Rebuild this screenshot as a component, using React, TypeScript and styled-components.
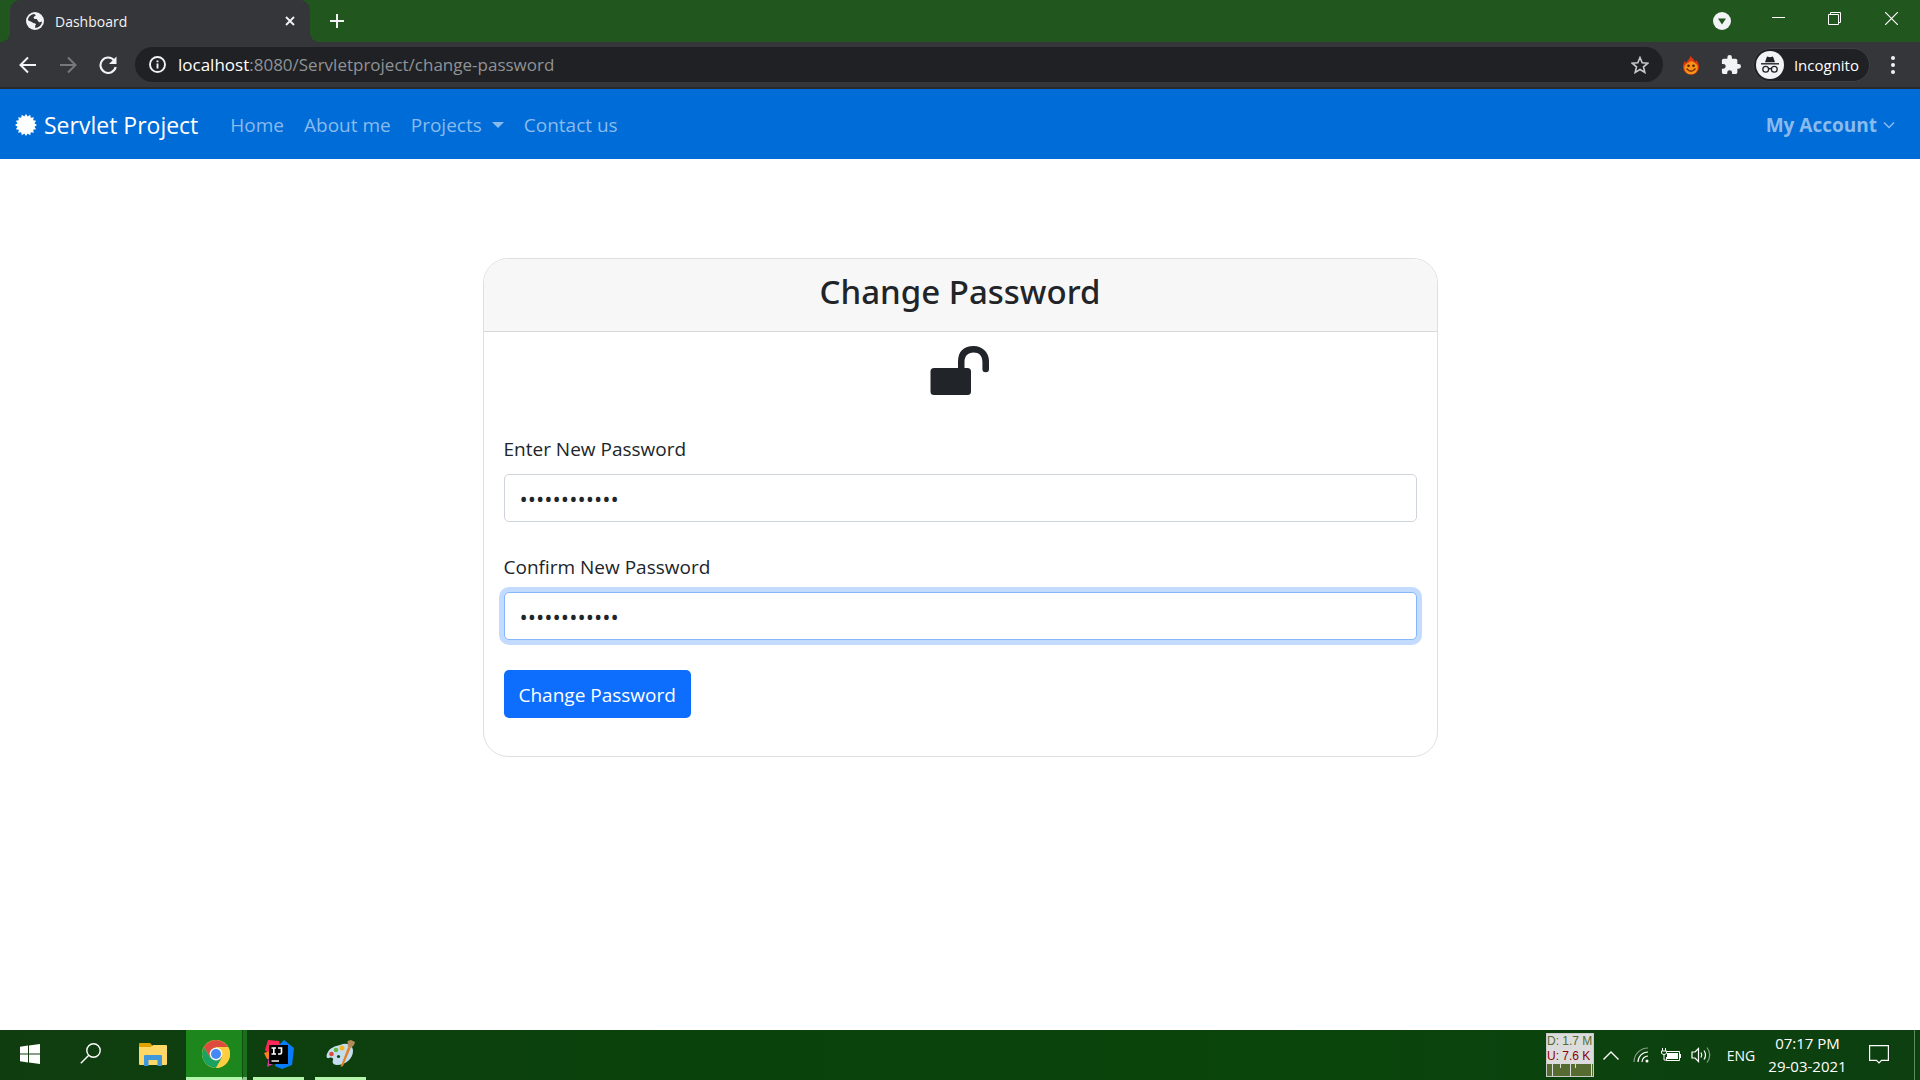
import React, { useState } from 'react';
import styled, { createGlobalStyle } from 'styled-components';

const ui = '"Segoe UI", "Open Sans", "Noto Sans", sans-serif';

const GlobalStyle = createGlobalStyle`
  *, *::before, *::after { box-sizing: border-box; }
  body { margin: 0; font-family: ${ui}; color: #212529; background: #fff; }
  button, input { font-family: inherit; }
  svg { display: block; flex: none; }
  a { text-decoration: none; color: inherit; }
`;

const Screen = styled.div`
  min-height: 100vh;
  display: flex;
  flex-direction: column;
`;

const IconButton = styled.button<{ $w?: number; $h?: number }>`
  border: 0;
  padding: 0;
  background: transparent;
  color: inherit;
  width: ${p => p.$w ?? 40}px;
  height: ${p => p.$h ?? 40}px;
  display: flex;
  align-items: center;
  justify-content: center;
`;

/* Browser chrome */
const TabStrip = styled.div`
  height: 42px;
  display: flex;
  align-items: stretch;
  padding-left: 10px;
  background: #21561f;
  color: #f1f3f4;
`;

const TitleTab = styled.div`
  position: relative;
  width: 300px;
  display: flex;
  align-items: center;
  gap: 11px;
  padding: 0 8px 0 16px;
  margin-right: 10px;
  border-radius: 10px 10px 0 0;
  background: #35363a;
  font-size: 14px;
  &::before, &::after {
    content: '';
    position: absolute;
    bottom: 0;
    width: 10px;
    height: 10px;
  }
  &::before { left: -10px; background: radial-gradient(circle at 0 0, transparent 10px, #35363a 10px); }
  &::after { right: -10px; background: radial-gradient(circle at 100% 0, transparent 10px, #35363a 10px); }
`;

const Grow = styled.span`flex: 1;`;

const WindowControls = styled.div`
  display: flex;
  align-items: flex-start;
`;

const Toolbar = styled.div`
  height: 47px;
  display: flex;
  align-items: center;
  padding: 0 10px 0 8px;
  background: #35363a;
  border-bottom: 2px solid #29292c;
  color: #f1f3f4;
`;

const Omnibox = styled.label`
  flex: 1;
  height: 35px;
  margin: 0 8px 0 7px;
  padding: 0 14px;
  border-radius: 18px;
  background: #202124;
  display: flex;
  align-items: center;
  gap: 12px;
  font-size: 17px;
`;

const Url = styled.span`
  flex: 1;
  color: #8f9397;
  white-space: nowrap;
  b { font-weight: 400; color: #fff; }
`;

const Profile = styled.button`
  height: 34px;
  display: flex;
  align-items: center;
  gap: 10px;
  margin: 0 6px 0 2px;
  padding: 0 10px 0 2px;
  border: 1px solid #3f4044;
  border-radius: 17px;
  background: #202124;
  color: #fff;
  font-size: 15px;
`;

/* Site */
const Navbar = styled.nav`
  height: 70px;
  display: flex;
  align-items: center;
  padding: 2px 25px 0 15px;
  background: #006cd8;
  color: #8abbed;
  font-size: 19px;
`;

const Brand = styled.a`
  display: flex;
  align-items: center;
  gap: 7px;
  margin-right: 32px;
  color: #fff;
  font-size: 23px;
`;

const NavList = styled.ul`
  flex: 1;
  display: flex;
  gap: 20px;
  margin: 0;
  padding: 0;
  list-style: none;
`;

const NavLink = styled.a<{ $strong?: boolean }>`
  display: flex;
  align-items: center;
  gap: ${p => (p.$strong ? 6 : 10)}px;
  font-weight: ${p => (p.$strong ? 700 : 400)};
`;

const Caret = styled.span`
  border: 6px solid transparent;
  border-top-color: currentColor;
  border-bottom: 0;
`;

const Main = styled.main`
  flex: 1;
  padding: 99px 20px 60px;
`;

const Card = styled.section`
  max-width: 955px;
  margin: 0 auto;
  border: 1px solid #dfdfdf;
  border-radius: 25px;
  overflow: hidden;
`;

const CardHeader = styled.header`
  padding: 12px 20px 18px;
  text-align: center;
  background: #f7f7f7;
  border-bottom: 1px solid #d8d8d8;
`;

const Title = styled.h1`
  margin: 0;
  font-family: "Segoe UI", "Noto Sans", "Open Sans", sans-serif;
  font-size: 33px;
  line-height: 42px;
  font-weight: 500;
`;

const CardBody = styled.div`
  padding: 10px 20px 38px;
`;

const LockRow = styled.div`
  display: flex;
  justify-content: center;
  padding-bottom: 32px;
`;

const Field = styled.div`
  margin-bottom: 30px;
`;

const Label = styled.label`
  display: block;
  margin-bottom: 10px;
  font-size: 19px;
  line-height: 30px;
`;

const Input = styled.input<{ $active?: boolean }>`
  display: block;
  width: 100%;
  height: 48px;
  padding: 8px 15px;
  border: 1px solid ${p => (p.$active ? '#86b7fe' : '#ced4da')};
  border-radius: 5px;
  box-shadow: ${p => (p.$active ? '0 0 0 5px #c2dbff' : 'none')};
  outline: 0;
  background: #fff;
  color: #212529;
  font-size: 22px;
`;

const Submit = styled.button`
  height: 48px;
  padding: 2px 15px 0;
  border: 0;
  border-radius: 5px;
  background: #0d6efd;
  color: #fff;
  font-size: 19px;
`;

/* Taskbar */
const Taskbar = styled.footer`
  height: 50px;
  display: flex;
  align-items: stretch;
  background: linear-gradient(90deg, #103d10, #0a420b 35%, #0a450c 70%, #0d3f10);
  color: #fff;
`;

const TaskButton = styled.button<{ $w: number; $state?: 'active' | 'open' }>`
  width: ${p => p.$w}px;
  padding: 0 0 0 ${p => (p.$state === 'active' ? 4 : 0)}px;
  border: 0;
  border-bottom: 3px solid ${p => (p.$state ? '#b4f5ac' : 'transparent')};
  background: ${p => (p.$state === 'active' ? '#1d871d' : 'transparent')};
  display: flex;
  align-items: center;
  justify-content: center;
  color: inherit;
`;

const Stacked = styled.span`
  width: 5px;
  margin-right: 6px;
  background: #1a6f1a;
  border-left: 1px solid #0f4d10;
  border-bottom: 3px solid #8fc98c;
`;

const Apps = styled.div`
  flex: 1;
  display: flex;
`;

const Gap = styled.span`width: 11px;`;

const Tray = styled.div`
  display: flex;
  align-items: center;
  font-size: 14px;
`;

const Meter = styled.div`
  width: 48px;
  height: 44px;
  border: 1px solid #c8c8c8;
  background: #dcdcdc;
  margin-right: 3px;
  font: 12px/15px "Liberation Sans", sans-serif;
  white-space: nowrap;
`;

const MeterText = styled.div<{ $c: string }>`color: ${p => p.$c};`;

const Language = styled.button`
  border: 0;
  padding: 0;
  width: 48px;
  background: transparent;
  color: inherit;
  font-size: 14px;
`;

const Clock = styled.time`
  width: 85px;
  text-align: center;
  font-size: 15px;
  line-height: 23px;
`;

const ShowDesktop = styled.button`
  align-self: stretch;
  width: 6px;
  margin-left: 6px;
  padding: 0;
  border: 0;
  border-left: 1px solid #5f8a60;
  background: transparent;
`;

const Globe = () => (
  <svg width="18" height="18" viewBox="0 0 18 18">
    <circle cx="9" cy="9" r="9" fill="#f1f3f4" />
    <path d="M8.500 2C5 2.200 2.200 4.800 2 8.300L5.800 9.900C7.200 10.500 7.200 11.200 9 11.300L10.100 12.400L9.200 13.500V16C12.800 15.800 15.800 13 16 9.500L13.400 10L11.900 8.600L11 6.800H8.400L7.400 5.300L9.800 3.600Z" fill="#35363a" />
    <path d="M10 3.800L8 5.300L8.600 7H11L12 9L13.600 10.500L15.500 9.200C15.500 6 13 3.600 10 3.800Z" fill="#f1f3f4" />
  </svg>
);

const Badge = () => {
  const pts = Array.from({ length: 32 }, (_, i) => {
    const r = i % 2 ? 8.6 : 11;
    const a = (i * Math.PI) / 16;
    return `${11 + r * Math.sin(a)},${11 - r * Math.cos(a)}`;
  }).join(' ');
  return <svg width="22" height="22" viewBox="0 0 22 22"><polygon points={pts} fill="#fff" /></svg>;
};

const Unlock = () => (
  <svg width="60" height="60" viewBox="0 0 60 60" fill="#212529">
    <path d="M4 26H28V20C28 9 34 4 43.500 4S59 11 59 19V27A3.300 3.300 0 0 1 52.400 27V20C52.400 13.500 49 10.500 43.500 10.500S34.500 14 34.500 20V26H37.500A3.500 3.500 0 0 1 41 29.500V49.500A3.500 3.500 0 0 1 37.500 53H4A3.500 3.500 0 0 1 .5 49.500V29.500A3.500 3.500 0 0 1 4 26Z" />
  </svg>
);

const Flame = () => (
  <svg width="18" height="20" viewBox="0 0 18 20">
    <path d="M8.500 0C9 3 12.500 4 13 7L14.500 5.500C16 7.500 17 9.500 17 12A8 7.800 0 0 1 1 12C1 9.500 2 8 2.500 6L4.500 8C5 5 8.500 4 8.500 0Z" fill="#e2380f" />
    <path d="M9 6C12 7 16 9 15.700 13A6.700 6.300 0 0 1 2.300 13C2.300 9 6 8 9 6Z" fill="#f7931a" />
    <circle cx="6.500" cy="10.800" r="1.300" fill="#55200a" /><circle cx="11.500" cy="10.800" r="1.300" fill="#55200a" />
    <path d="M4.500 13.500Q9 19 13.500 13.500" fill="none" stroke="#7a2b08" strokeWidth="1.300" />
  </svg>
);

const Incognito = () => (
  <svg width="28" height="28" viewBox="0 0 28 28">
    <circle cx="14" cy="14" r="14" fill="#f1f3f4" />
    <path d="M9 11.200L10.700 6.200Q11 5.400 12 5.700L14 6.200L16 5.700Q17 5.400 17.300 6.200L19 11.200Z" fill="#202124" />
    <path d="M5 12.800H23" stroke="#202124" strokeWidth="1.400" />
    <g fill="none" stroke="#202124" strokeWidth="1.300"><circle cx="9.700" cy="18.300" r="2.900" /><circle cx="18.300" cy="18.300" r="2.900" /><path d="M12.600 18Q14 17 15.400 18" /></g>
  </svg>
);

const Chrome = () => (
  <svg width="28" height="28" viewBox="0 0 28 28">
    <circle cx="14" cy="14" r="14" fill="#ffcd40" />
    <path d="M14 14L8 17.500L1.900 7A14 14 0 0 1 26.100 7H14Z" fill="#dc4b3e" />
    <path d="M1.900 7A14 14 0 0 0 14 28L20 17.500L14 14L8 17.500Z" fill="#1ba160" />
    <path d="M26.100 7A14 14 0 0 1 14 28L20 17.500A7 7 0 0 0 14 7Z" fill="#ffcd40" />
    <circle cx="14" cy="14" r="6.400" fill="#f4f6f8" /><circle cx="14" cy="14" r="5" fill="#4587f3" />
  </svg>
);

const Explorer = () => (
  <svg width="28" height="24" viewBox="0 0 28 24">
    <path d="M0 2Q0 1 1 1H11L13 3V6H0Z" fill="#e0a000" />
    <path d="M0 5H12L14 3H27Q28 3 28 4V22Q28 23 27 23H1Q0 23 0 22Z" fill="#ffd766" />
    <path d="M5 24V14Q5 13 6 13H22Q23 13 23 14V24H18.500V18H9.500V24Z" fill="#3f98db" />
  </svg>
);

const IntelliJ = () => (
  <svg width="30" height="30" viewBox="0 0 30 30">
    <path d="M4 1L15 2L18 14L8 18L1 11Z" fill="#fe2857" />
    <path d="M0 14L6 12L10 20L3 20Z" fill="#fc801d" />
    <path d="M3 28L5 17L15 22Z" fill="#dd35a5" />
    <path d="M20 1L30 9L28 26L18 30L11 27L14 7Z" fill="#087cfa" />
    <rect x="5" y="6" width="19" height="19" fill="#000" />
    <path d="M7.500 9H12M9.800 9V15M7.500 15H12M14 9H17.500V13.500Q17.500 15 16 15H14" fill="none" stroke="#fff" strokeWidth="1.600" />
    <path d="M7.500 22H15" stroke="#fff" strokeWidth="1.400" />
  </svg>
);

const Palette = () => (
  <svg width="30" height="30" viewBox="0 0 30 30">
    <path d="M14 6C21 3 27 6 27 12C27 20 19 26 11 26C7 26 6 23 7 21C8 19 5 18 3 19C0 20 0 16 2 13C4 9 9 7 14 6Z" fill="#c5deef" />
    <circle cx="5.500" cy="15" r="2.300" fill="#d84b3d" /><circle cx="10" cy="11" r="2.300" fill="#62b545" /><circle cx="16" cy="9" r="2.500" fill="#f4b51e" /><circle cx="12.500" cy="17.500" r="1.600" fill="#0e430f" />
    <path d="M14.500 28L22 8L24.500 9.500L17 27Z" fill="#e1832b" />
    <path d="M22 8L21.500 2L25 1L29 3L28 6L24.500 9.500Z" fill="#b58a5a" />
  </svg>
);

export default function App() {
  const [password, setPassword] = useState('password1234');
  const [confirm, setConfirm] = useState('password1234');
  return (
    <Screen>
      <GlobalStyle />
      <TabStrip>
        <TitleTab>
          <Globe />Dashboard<Grow />
          <IconButton $w={24} $h={24} aria-label="Close tab">
            <svg width="10" height="10" viewBox="0 0 10 10" stroke="currentColor" strokeWidth="1.800"><path d="M1 1L9 9M9 1L1 9" /></svg>
          </IconButton>
        </TitleTab>
        <IconButton $w={34} $h={42} aria-label="New tab">
          <svg width="14" height="14" viewBox="0 0 14 14" stroke="currentColor" strokeWidth="2"><path d="M7 0V14M0 7H14" /></svg>
        </IconButton>
        <Grow />
        <WindowControls>
          <IconButton $w={56} $h={42} aria-label="Search tabs">
            <svg width="18" height="18" viewBox="0 0 18 18"><circle cx="9" cy="9" r="9" fill="#f1f3f4" /><path d="M5 6.500H13L9 12.500Z" fill="#21561f" /></svg>
          </IconButton>
          <IconButton $w={56} $h={37} aria-label="Minimize">
            <svg width="13" height="13" viewBox="0 0 13 13" stroke="#fff"><path d="M0 5.500H13" /></svg>
          </IconButton>
          <IconButton $w={56} $h={37} aria-label="Restore">
            <svg width="13" height="13" viewBox="0 0 13 13" stroke="#fff" fill="none"><path d="M.5 2.500H10.500V12.500H.5ZM2.500 2.500V.5H12.500V10.500H10.500" /></svg>
          </IconButton>
          <IconButton $w={58} $h={37} aria-label="Close">
            <svg width="13" height="13" viewBox="0 0 13 13" stroke="#fff" strokeWidth="1.200"><path d="M0 0L13 13M13 0L0 13" /></svg>
          </IconButton>
        </WindowControls>
      </TabStrip>
      <Toolbar>
        <IconButton aria-label="Back">
          <svg width="18" height="18" viewBox="0 0 18 18" fill="none" stroke="currentColor" strokeWidth="2"><path d="M17 9H2M9 1.500L1.500 9L9 16.500" /></svg>
        </IconButton>
        <IconButton aria-label="Forward">
          <svg width="18" height="18" viewBox="0 0 18 18" fill="none" stroke="#77787b" strokeWidth="2"><path d="M1 9H16M9 1.500L16.500 9L9 16.500" /></svg>
        </IconButton>
        <IconButton aria-label="Reload">
          <svg width="18" height="18" viewBox="0 0 18 18"><path d="M15.300 4.500A7.700 7.700 0 1 0 16.700 11" fill="none" stroke="currentColor" strokeWidth="2.100" /><path d="M17.500 .5V8H10Z" fill="currentColor" /></svg>
        </IconButton>
        <Omnibox>
          <svg width="17" height="17" viewBox="0 0 17 17" fill="none" stroke="currentColor" strokeWidth="1.900"><circle cx="8.500" cy="8.500" r="7.500" /><path d="M8.500 7.500V12.500M8.500 4.500V6.200" /></svg>
          <Url><b>localhost</b>:8080/Servletproject/change-password</Url>
          <svg width="18" height="18" viewBox="0 0 18 18" fill="none" stroke="#c8c9cb" strokeWidth="1.600"><path d="M9 1.500L11.200 6.700L16.800 7.200L12.500 10.900L13.800 16.400L9 13.500L4.200 16.400L5.500 10.900L1.200 7.200L6.800 6.700Z" /></svg>
        </Omnibox>
        <IconButton aria-label="Extension"><Flame /></IconButton>
        <IconButton aria-label="Extensions">
          <svg width="20" height="20" viewBox="1 1 22 22" fill="currentColor"><path d="M20.500 11H19V7c0-1.100-.9-2-2-2h-4V3.500a2.500 2.500 0 0 0-5 0V5H4c-1.100 0-2 .9-2 2v3.800h1.500a2.700 2.700 0 0 1 0 5.400H2V20c0 1.100.9 2 2 2h3.800v-1.500a2.700 2.700 0 0 1 5.400 0V22H17c1.100 0 2-.9 2-2v-4h1.500a2.500 2.500 0 0 0 0-5z" /></svg>
        </IconButton>
        <Profile><Incognito />Incognito</Profile>
        <IconButton $w={34} aria-label="Menu">
          <svg width="4" height="18" viewBox="0 0 4 18" fill="currentColor"><circle cx="2" cy="2" r="2" /><circle cx="2" cy="9" r="2" /><circle cx="2" cy="16" r="2" /></svg>
        </IconButton>
      </Toolbar>

      <Navbar>
        <Brand href="#"><Badge />Servlet Project</Brand>
        <NavList>
          <li><NavLink href="#">Home</NavLink></li>
          <li><NavLink href="#">About me</NavLink></li>
          <li><NavLink href="#">Projects <Caret /></NavLink></li>
          <li><NavLink href="#">Contact us</NavLink></li>
        </NavList>
        <NavLink href="#" $strong>
          My Account
          <svg width="12" height="8" viewBox="0 0 12 8" fill="none" stroke="currentColor" strokeWidth="1.500"><path d="M1 1.500L6 6.500L11 1.500" /></svg>
        </NavLink>
      </Navbar>

      <Main>
        <Card>
          <CardHeader><Title>Change Password</Title></CardHeader>
          <CardBody>
            <LockRow><Unlock /></LockRow>
            <form onSubmit={e => e.preventDefault()}>
              <Field>
                <Label htmlFor="new-password">Enter New Password</Label>
                <Input id="new-password" type="password" value={password} onChange={e => setPassword(e.target.value)} />
              </Field>
              <Field>
                <Label htmlFor="confirm-password">Confirm New Password</Label>
                <Input id="confirm-password" type="password" $active value={confirm} onChange={e => setConfirm(e.target.value)} />
              </Field>
              <Submit type="submit">Change Password</Submit>
            </form>
          </CardBody>
        </Card>
      </Main>

      <Taskbar>
        <Apps>
          <TaskButton $w={60} aria-label="Start">
            <svg width="20" height="20" viewBox="0 0 20 20" fill="#fff"><path d="M0 2.800L8 1.600V9.500H0ZM9 1.500L20 0V9.500H9ZM0 10.500H8V18.400L0 17.200ZM9 10.500H20V20L9 18.500Z" /></svg>
          </TaskButton>
          <TaskButton $w={60} aria-label="Search">
            <svg width="21" height="21" viewBox="0 0 21 21" fill="none" stroke="#fff" strokeWidth="1.400"><circle cx="13.500" cy="7.500" r="6.700" /><path d="M8.800 12.200L.8 20.200" /></svg>
          </TaskButton>
          <TaskButton $w={66} aria-label="File Explorer"><Explorer /></TaskButton>
          <TaskButton $w={56} $state="active" aria-label="Chrome"><Chrome /></TaskButton>
          <Stacked />
          <TaskButton $w={51} $state="open" aria-label="IntelliJ IDEA"><IntelliJ /></TaskButton>
          <Gap />
          <TaskButton $w={51} $state="open" aria-label="Paint"><Palette /></TaskButton>
        </Apps>
        <Tray>
          <Meter>
            <MeterText $c="#556b2f">D: 1.7 M</MeterText>
            <MeterText $c="#8b0000">U: 7.6 K</MeterText>
            <svg width="46" height="12" viewBox="0 0 46 12"><path d="M0 0H46V12H0Z" fill="#556b2f" /><path d="M5.500 0V12M13.500 0V4M23.500 0V12M28.500 0V4M44.500 0V12" stroke="#dcdcdc" /></svg>
          </Meter>
          <IconButton $w={28} aria-label="Hidden icons">
            <svg width="16" height="9" viewBox="0 0 16 9" fill="none" stroke="#fff" strokeWidth="1.400"><path d="M.5 8.500L8 1L15.500 8.500" /></svg>
          </IconButton>
          <IconButton $w={32} aria-label="Network">
            <svg width="16" height="16" viewBox="0 0 16 16" fill="none" stroke="#fff" strokeWidth="1.200"><path d="M1 15A14 14 0 0 1 15 1" opacity=".5" /><path d="M5 15A10 10 0 0 1 15 5M9 15A6 6 0 0 1 15 9" /><circle cx="14" cy="14" r="1.500" fill="#fff" stroke="none" /></svg>
          </IconButton>
          <IconButton $w={28} aria-label="Battery">
            <svg width="20" height="14" viewBox="0 0 20 14"><path d="M6 3.500H18.500V12.500H5.500V9M19.500 6V10" fill="none" stroke="#fff" /><path d="M6 5H17V11H6Z" fill="#fff" /><path d="M1.500 0V3M4.500 0V3M.5 3H5.500V5Q5 6.500 3 6.500T.5 5ZM3 6V12H6" stroke="#fff" fill="none" /></svg>
          </IconButton>
          <IconButton $w={32} aria-label="Volume">
            <svg width="20" height="18" viewBox="0 0 20 18" fill="none" stroke="#fff" strokeWidth="1.200"><path d="M1 6H4L7.500 2.500V15.500L4 12H1ZM10 6.500Q11.500 9 10 11.500M13 4.500Q16 9 13 13.500" /><path d="M16 1.500Q21.500 9 16 16.500" opacity=".5" /></svg>
          </IconButton>
          <Language>ENG</Language>
          <Clock>07:17 PM<br />29-03-2021</Clock>
          <IconButton $w={58} aria-label="Notifications">
            <svg width="20" height="20" viewBox="0 0 20 20" fill="none" stroke="#fff" strokeWidth="1.200"><path d="M.6 .6H19.400V15.400H12.500L10 18L7.500 15.400H.6Z" /></svg>
          </IconButton>
          <ShowDesktop aria-label="Show desktop" />
        </Tray>
      </Taskbar>
    </Screen>
  );
}
